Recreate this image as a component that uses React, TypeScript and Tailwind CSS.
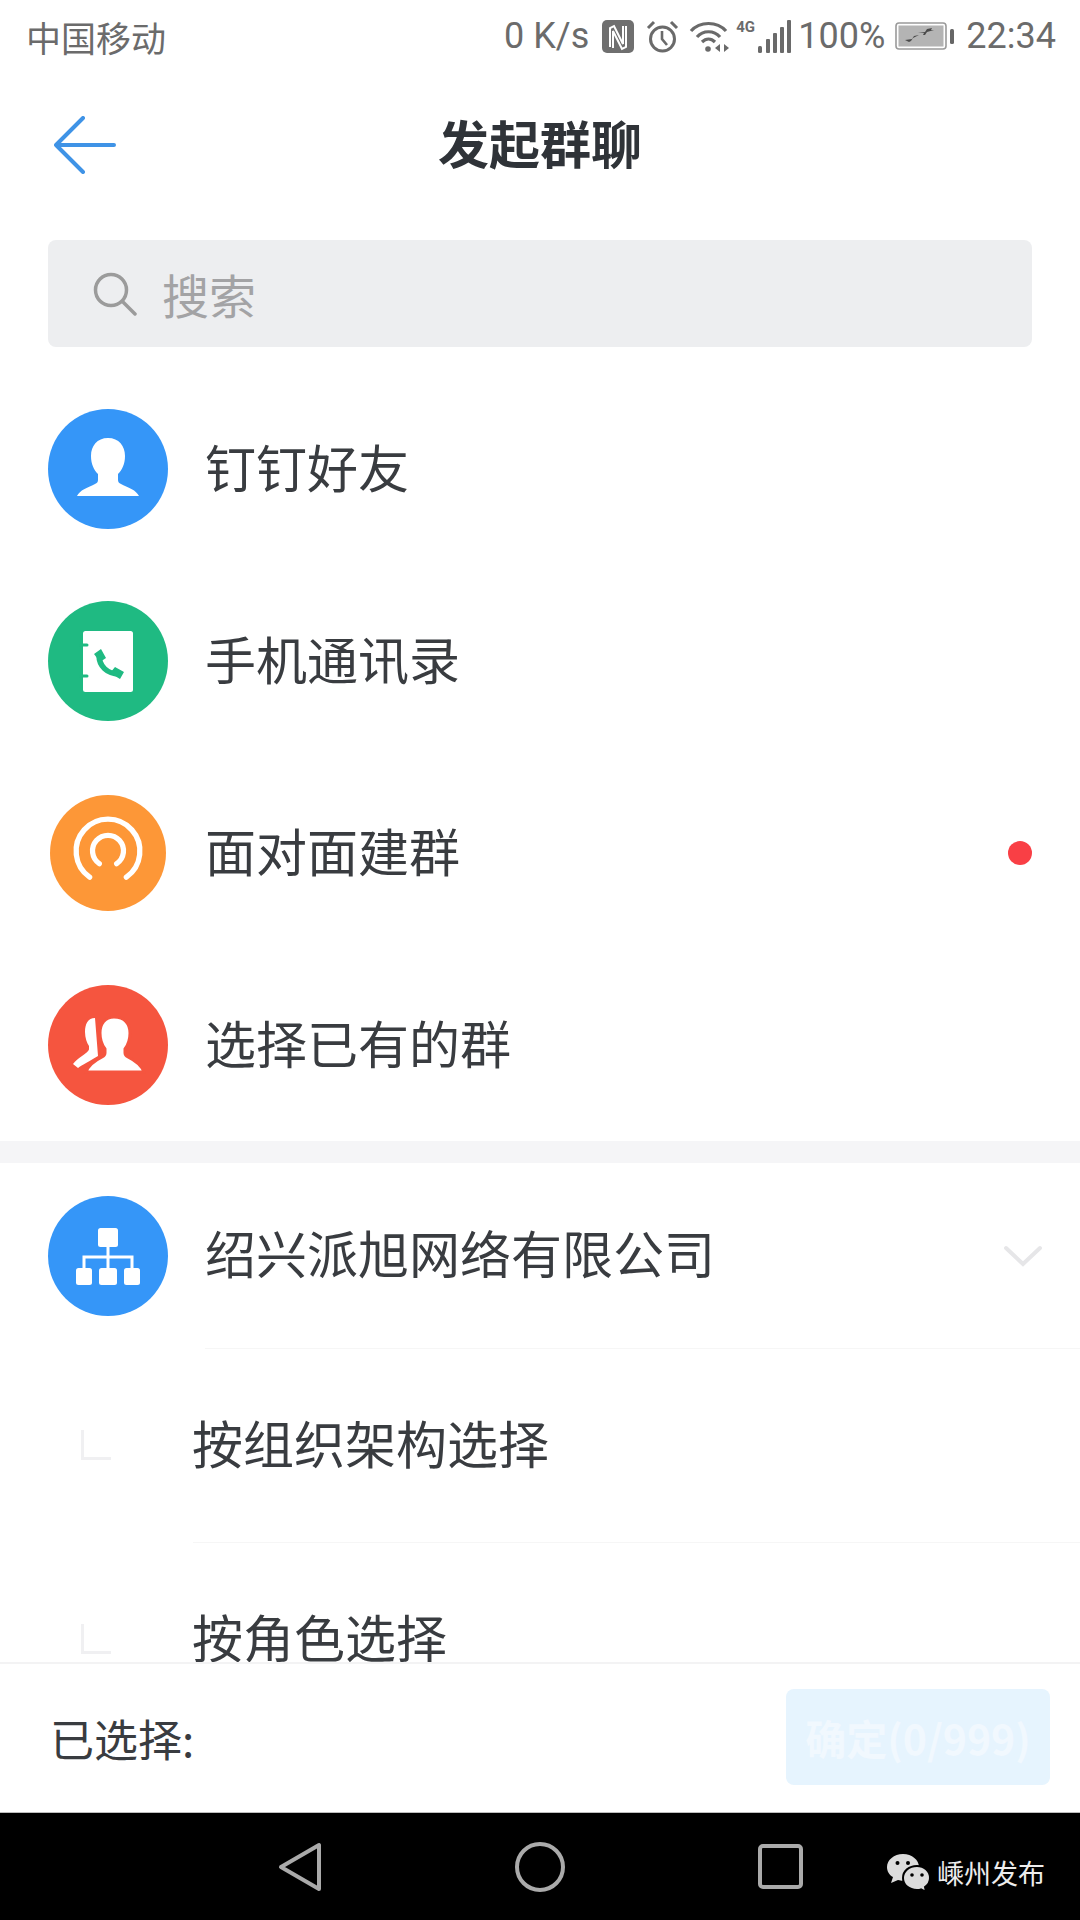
const cjk = 'font-["Noto_Sans_CJK_SC","Noto_Sans",sans-serif]'

function NfcIcon() {
  return (
    <svg width="32" height="33" viewBox="0 0 32 33" className="ml-[13px]">
      <rect width="32" height="33" rx="5" fill="#6f6f6f" />
      <path d="M8 27V8l4-2 9 18V6M24 6v21l-4 2-9-18v17" fill="none" stroke="#fff" strokeWidth="2" />
    </svg>
  )
}

function AlarmIcon() {
  return (
    <svg width="33" height="33" viewBox="0 0 33 33" className="ml-[12px]" fill="none" stroke="#6a6a6a">
      <circle cx="16.5" cy="19" r="12" strokeWidth="3" />
      <path d="M16 11v8l5 6" strokeWidth="2.6" />
      <path d="M2 8l6-6M31 8l-6-6" strokeWidth="3" />
    </svg>
  )
}

function WifiIcon() {
  return (
    <svg width="40" height="32" viewBox="0 0 40 32" className="ml-[10px]" fill="none" stroke="#6a6a6a" strokeWidth="3.2">
      <path d="M2 11C11 1 28 1 37 11" />
      <path d="M8 17C14 10 25 10 31 17" />
      <path d="M13 22C17 18 22 18 26 22" />
      <circle cx="19" cy="29" r="2.8" fill="#6a6a6a" stroke="none" />
      <path d="M31 24v8l-5-4zM35 24v8l5-4z" fill="#6a6a6a" stroke="none" />
    </svg>
  )
}

function SignalIcon() {
  return (
    <svg width="34" height="33" viewBox="0 0 34 33" fill="#6a6a6a">
      <rect x="0" y="26" width="4" height="7" rx="1.5" />
      <rect x="8" y="19" width="4" height="14" rx="1" />
      <rect x="15" y="13" width="4" height="20" rx="1" />
      <rect x="22" y="7" width="4" height="26" rx="1" />
      <rect x="29" y="0" width="4" height="33" rx="1" />
    </svg>
  )
}

function BatteryIcon() {
  return (
    <svg width="60" height="28" viewBox="0 0 60 28" className="ml-[10px]">
      <rect x="1" y="1" width="50" height="26" rx="3" fill="#fff" stroke="#9a9a9a" strokeWidth="1.6" />
      <rect x="3.5" y="3.5" width="45" height="21" fill="#b4b4b4" />
      <rect x="55" y="7" width="4" height="15" rx="1.5" fill="#666" />
      <path d="M10 18l7-1 2-3 5-1-6 3-2 3-2 1zM23 11l7-1 2-3 5-1-1 2 3 0-7 2-2 3-2 0 1-2z" fill="#4a4a4a" />
    </svg>
  )
}

function StatusBar() {
  return (
    <div className="flex h-[72px] shrink-0 items-center justify-between pl-[26px] pr-[24px] text-[#6b6b6b]">
      <span className={`${cjk} text-[35px] leading-none`}>中国移动</span>
      <div className='flex items-center font-["Roboto",sans-serif] text-[36px] leading-none'>
        <span>0 K/s</span>
        <NfcIcon />
        <AlarmIcon />
        <WifiIcon />
        <div className="ml-[7px] flex items-start">
          <span className="mb-[16px] w-[22px] text-[15px] font-bold leading-none">4G</span>
          <SignalIcon />
        </div>
        <span className="ml-[6px]">100%</span>
        <BatteryIcon />
        <span className="ml-[11px]">22:34</span>
      </div>
    </div>
  )
}

function Header() {
  return (
    <div className="relative flex h-[144px] shrink-0 items-center justify-center">
      <svg width="62" height="58" viewBox="0 0 62 58" className="absolute left-[54px] top-[44px]" fill="none" stroke="#3f93e6" strokeWidth="4" strokeLinecap="round" strokeLinejoin="round">
        <path d="M29 2L2 29l27 27M2 29h58" />
      </svg>
      <h1 className={`${cjk} mb-[4px] text-[51px] font-bold leading-none text-[#2f3338]`}>发起群聊</h1>
    </div>
  )
}

function BlueFriendIcon() {
  return (
    <svg viewBox="0 0 120 120" className="h-full w-full">
      <circle cx="60" cy="60" r="60" fill="#3596f8" />
      <path d="M60 29c-11 0-17 8-17 18 0 8 3 14 7 18v6c0 2-1 3-3 4-8 4-15 6-18 12h62c-3-6-10-8-18-12-2-1-3-2-3-4v-6c4-4 7-10 7-18 0-10-6-18-17-18z" fill="#fff" />
    </svg>
  )
}

function ContactsIcon() {
  return (
    <svg viewBox="0 0 120 120" className="h-full w-full">
      <circle cx="60" cy="60" r="60" fill="#1fba82" />
      <rect x="35" y="30" width="50" height="61" rx="2.5" fill="#fff" />
      <path d="M33 44h6M33 75h6" stroke="#1fba82" strokeWidth="3" strokeLinecap="round" />
      <path d="M51 54c0 11 8 19 20 19" fill="none" stroke="#1fba82" strokeWidth="5.500" />
      <path d="M46 53l7-5 5 9-6 4zM62 72l5-6 9 5-4 7z" fill="#1fba82" />
    </svg>
  )
}

function FaceIcon() {
  return (
    <svg viewBox="0 0 120 120" className="h-full w-full">
      <circle cx="60" cy="60" r="60" fill="#fd9737" />
      <path d="M41 85A33 33 0 1 1 79 85" fill="none" stroke="#fff" strokeWidth="5.500" strokeLinecap="round" />
      <path d="M51 71A16 16 0 1 1 69 71" fill="none" stroke="#fff" strokeWidth="5.500" strokeLinecap="round" />
    </svg>
  )
}

function GroupIcon() {
  return (
    <svg viewBox="0 0 120 120" className="h-full w-full">
      <circle cx="60" cy="60" r="60" fill="#f5553f" />
      <path d="M47 33c-7 0-10 6-10 14 0 6 2 11 4 14v3c0 2-3 4-7 7-4 3-7 5-9 8l5 4c4-3 12-7 20-12z" fill="#fff" />
      <path d="M66 32c-9 0-14 7-14 16 0 7 2 12 5 16v4c0 2-1 3-3 4-6 3-13 7-16 15h58c-3-8-10-12-16-15-2-1-3-2-3-4v-4c3-4 5-9 5-16 0-9-5-16-16-16z" fill="#fff" stroke="#f5553f" strokeWidth="3" />
    </svg>
  )
}

function OrgIcon() {
  return (
    <svg viewBox="0 0 120 120" className="h-full w-full">
      <circle cx="60" cy="60" r="60" fill="#3596f8" />
      <path d="M60 48v12M36 74v-13h48v13M60 60v14" fill="none" stroke="#fff" strokeWidth="3" />
      <rect x="50" y="32" width="20" height="19" rx="2.5" fill="#fff" />
      <rect x="28" y="72" width="16" height="17" rx="2.5" fill="#fff" />
      <rect x="51" y="72" width="18" height="17" rx="2.5" fill="#fff" />
      <rect x="76" y="72" width="16" height="17" rx="2.5" fill="#fff" />
    </svg>
  )
}

function IconRow({ icon, label, dot, small }: { icon: React.ReactNode; label: string; dot?: boolean; small?: boolean }) {
  return (
    <div className="flex h-[192px] items-center pl-[48px] pr-[48px]">
      <div className={small ? 'h-[120px] w-[120px] shrink-0 p-[2px]' : 'h-[120px] w-[120px] shrink-0'}>{icon}</div>
      <span className={`${cjk} mb-[6px] ml-[37px] flex-1 text-[51px] leading-none text-[#393c40]`}>{label}</span>
      {dot && <span className="h-[24px] w-[24px] rounded-full bg-[#f93f45]" />}
    </div>
  )
}

function SubRow({ label }: { label: string }) {
  return (
    <div className="flex h-[193px] shrink-0 items-center pb-[6px] pl-[81px]">
      <span className="mt-[4px] h-[30px] w-[30px] border-b-[3px] border-l-[3px] border-[#f0f0f2]" />
      <span className={`${cjk} ml-[81px] text-[51px] leading-none text-[#393c40]`}>{label}</span>
    </div>
  )
}

function NavBar() {
  return (
    <div className="flex h-[108px] shrink-0 items-center border-t border-t-[#bdbdbd] bg-black pl-[278px]">
      <svg width="44" height="50" viewBox="0 0 44 50" fill="none" stroke="#aaaaaa" strokeWidth="4" strokeLinejoin="round">
        <path d="M41 3v44L3 25z" />
      </svg>
      <svg width="50" height="50" viewBox="0 0 50 50" fill="none" stroke="#aaaaaa" strokeWidth="4" className="ml-[193px]">
        <circle cx="25" cy="25" r="23" />
      </svg>
      <svg width="45" height="45" viewBox="0 0 45 45" fill="none" stroke="#aaaaaa" strokeWidth="4" className="ml-[193px]">
        <rect x="2" y="2" width="41" height="41" rx="3" />
      </svg>
      <div className="ml-[84px] mt-[12px] flex items-center">
        <svg width="44" height="38" viewBox="0 0 44 38">
          <path d="M16 0C7 0 0 6 0 13c0 4 2 8 6 10l-2 6 7-3c2 .5 3 .7 5 .7 9 0 16-6 16-13.700C32 6 25 0 16 0z" fill="#dcdcdc" />
          <path d="M30 12c-8 0-14 5-14 12s6 12 14 12c1.500 0 3-.2 4-.6l5 2.600-1-5c3-2 5-5.500 5-9 0-7-6-12-13-12z" fill="#dcdcdc" stroke="#000" strokeWidth="2" />
          <circle cx="10.500" cy="9" r="2" fill="#000" />
          <circle cx="21" cy="9" r="2" fill="#000" />
          <circle cx="25" cy="21" r="1.800" fill="#000" />
          <circle cx="35" cy="21" r="1.800" fill="#000" />
        </svg>
        <span className={`${cjk} ml-[6px] text-[27px] leading-none text-[#ededed]`}>嵊州发布</span>
      </div>
    </div>
  )
}

export default function App() {
  return (
    <div className="flex h-[1920px] w-[1080px] flex-col overflow-hidden bg-white">
      <StatusBar />
      <Header />
      <div className="min-h-0 flex-1 overflow-hidden">
        <div className="mx-[48px] mt-[24px] flex h-[107px] items-center rounded-[8px] bg-[#edeef0] pl-[45px]">
          <svg width="44" height="44" viewBox="0 0 44 44" fill="none" stroke="#9b9b9b" strokeWidth="3.500" strokeLinecap="round">
            <circle cx="18" cy="18" r="15.500" />
            <path d="M30 30l12 12" />
          </svg>
          <span className={`${cjk} ml-[25px] text-[47px] leading-none text-[#a3a3a5]`}>搜索</span>
        </div>
        <div className="mt-[26px]">
          <IconRow icon={<BlueFriendIcon />} label="钉钉好友" />
          <IconRow icon={<ContactsIcon />} label="手机通讯录" />
          <IconRow icon={<FaceIcon />} label="面对面建群" dot small />
          <IconRow icon={<GroupIcon />} label="选择已有的群" />
        </div>
        <div className="h-[22px] bg-[#f5f5f7]" />
        <div className="flex h-[185px] items-center pl-[48px] pr-[38px]">
          <div className="h-[120px] w-[120px] shrink-0">
            <OrgIcon />
          </div>
          <span className={`${cjk} mb-[6px] ml-[37px] flex-1 text-[51px] leading-none text-[#393c40]`}>绍兴派旭网络有限公司</span>
          <svg width="38" height="22" viewBox="0 0 38 22" fill="none" stroke="#e6e6e8" strokeWidth="4" strokeLinecap="round">
            <path d="M2 3l17 16L36 3" />
          </svg>
        </div>
        <div className="ml-[205px] h-px bg-[#f6f6f6]" />
        <SubRow label="按组织架构选择" />
        <div className="ml-[193px] h-px bg-[#f6f6f6]" />
        <SubRow label="按角色选择" />
      </div>
      <div className="flex h-[150px] shrink-0 items-center justify-between border-t-2 border-t-[#f3f3f4] bg-white pl-[50px] pr-[30px]">
        <span className={`${cjk} text-[44px] leading-none text-[#393c40]`}>已选择:</span>
        <button className={`${cjk} mb-[2px] h-[96px] w-[264px] rounded-[8px] bg-[#e6f4fe] text-[41px] font-bold leading-none text-[#f1f8fe]`}>确定(0/999)</button>
      </div>
      <NavBar />
    </div>
  )
}
